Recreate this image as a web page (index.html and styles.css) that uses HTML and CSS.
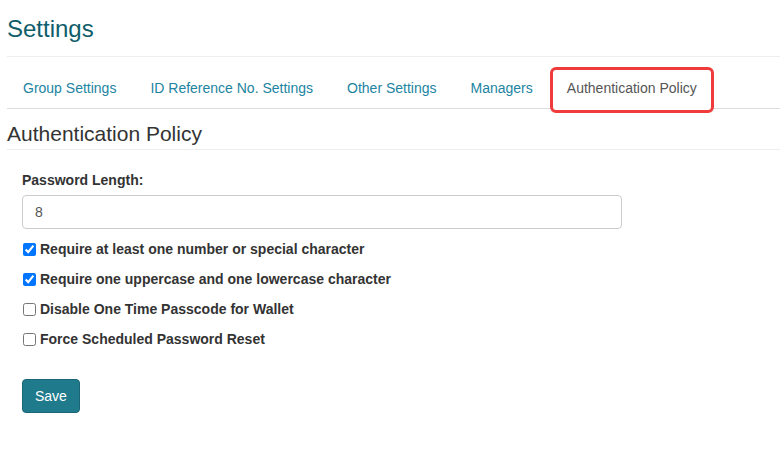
FILE: index.html
```html
<!DOCTYPE html>
<html lang="en">
<head>
    <meta charset="UTF-8">
    <meta name="viewport" content="width=device-width, initial-scale=1.0">
    <title>Settings</title>
    <link rel="stylesheet" href="styles.css">
</head>
<body>

<div class="container">
    <div class="page-header">
        <h1>Settings</h1>
    </div>

    <ul class="nav-tabs">
        <li><a href="#">Group Settings</a></li>
        <li><a href="#">ID Reference No. Settings</a></li>
        <li><a href="#">Other Settings</a></li>
        <li><a href="#">Managers</a></li>
        <li class="active"><a href="#">Authentication Policy</a></li>
    </ul>

    <h3 class="section-title">Authentication Policy</h3>

    <form class="policy-form">
        <label class="field-label" for="pwLength">Password Length:</label>
        <input class="form-control" id="pwLength" type="text" value="8">

        <label class="check-row"><input type="checkbox" checked> Require at least one number or special character</label>
        <label class="check-row"><input type="checkbox" checked> Require one uppercase and one lowercase character</label>
        <label class="check-row"><input type="checkbox"> Disable One Time Passcode for Wallet</label>
        <label class="check-row"><input type="checkbox"> Force Scheduled Password Reset</label>

        <button type="button" class="btn-save">Save</button>
    </form>
</div>

</body>
</html>
```

FILE: styles.css
```css
body {
    font-family: "Liberation Sans", Arial, sans-serif;
    font-size: 14px;
    color: #333;
    margin: 0;
    background-color: #fff;
}

.container {
    padding-left: 7px;
}

.page-header {
    padding: 16px 0 14px;
    border-bottom: 1px solid #eee;
}

.page-header h1 {
    margin: 0;
    font-size: 24px;
    font-weight: normal;
    line-height: 26px;
    color: #0f5d6b;
}

.nav-tabs {
    display: flex;
    list-style: none;
    margin: 11px 0 0;
    padding: 0;
    border-bottom: 1px solid #ddd;
}

.nav-tabs li {
    margin-right: 2px;
    margin-bottom: -1px;
}

.nav-tabs a {
    display: block;
    padding: 10px 16px;
    line-height: 20px;
    color: #2184a1;
    text-decoration: none;
}

.nav-tabs li.active {
    position: relative;
}

.nav-tabs li.active a {
    color: #555;
    background-color: #fff;
    padding-bottom: 11px;
}

/* highlight box around the selected tab */
.nav-tabs li.active::after {
    content: "";
    position: absolute;
    top: -1px;
    left: -1px;
    right: -1px;
    bottom: -4px;
    border: 3px solid #ee3b3b;
    border-radius: 6px;
}

.section-title {
    margin: 13px 0 0;
    padding-bottom: 3px;
    font-size: 21px;
    font-weight: normal;
    line-height: 24px;
    color: #333;
    border-bottom: 1px solid #eee;
}

.policy-form {
    padding: 20px 0 0 15px;
}

.field-label {
    display: block;
    font-weight: bold;
    line-height: 20px;
    margin-bottom: 5px;
}

.form-control {
    display: block;
    box-sizing: border-box;
    width: 600px;
    height: 34px;
    padding: 6px 12px;
    font-family: inherit;
    font-size: 14px;
    color: #555;
    border: 1px solid #ccc;
    border-radius: 4px;
    margin-bottom: 10px;
}

.check-row {
    display: flex;
    align-items: center;
    height: 20px;
    margin-bottom: 10px;
    font-weight: bold;
    line-height: 20px;
}

.check-row input {
    width: 13px;
    height: 13px;
    margin: 0 4px 0 1px;
}

.btn-save {
    margin-top: 20px;
    height: 34px;
    padding: 6px 12px;
    font-family: inherit;
    font-size: 14px;
    color: #fff;
    background-color: #1f7a8c;
    border: 1px solid #1a6676;
    border-radius: 4px;
    cursor: pointer;
}

.btn-save:hover {
    background-color: #196574;
}
```
